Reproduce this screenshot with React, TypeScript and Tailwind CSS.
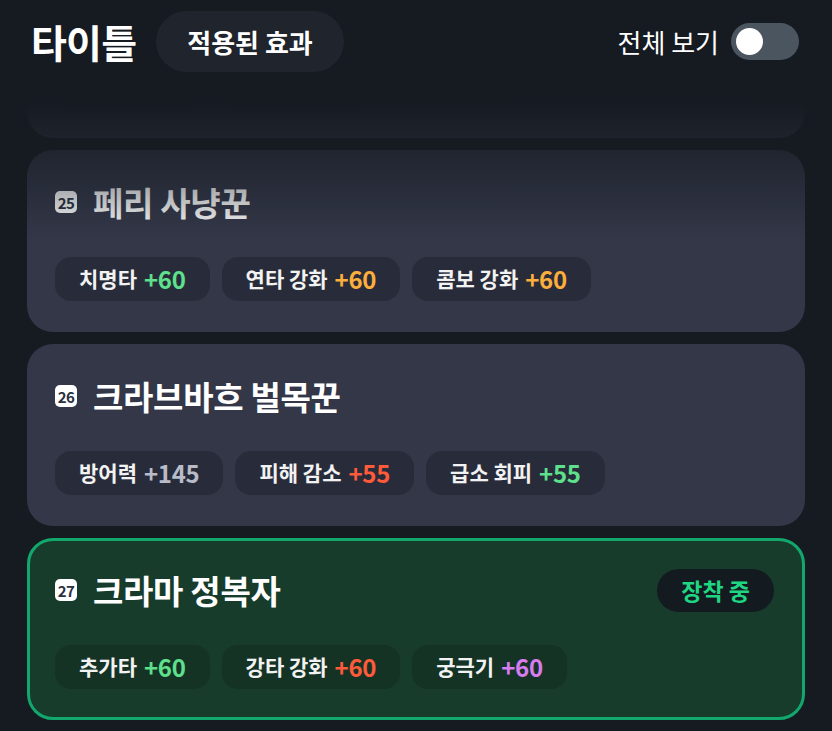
import { useState } from 'react'

type Stat = { label: string; value: string; tone: 'green' | 'orange' | 'gray' | 'red' | 'purple' }

interface Title {
  no: number
  name: string
  stats: Stat[]
  equipped?: boolean
}

const TITLES: Title[] = [
  {
    no: 24,
    name: '숲의 수호자',
    stats: [
      { label: '체력', value: '+120', tone: 'gray' },
      { label: '치명타', value: '+40', tone: 'green' },
    ],
  },
  {
    no: 25,
    name: '페리 사냥꾼',
    stats: [
      { label: '치명타', value: '+60', tone: 'green' },
      { label: '연타 강화', value: '+60', tone: 'orange' },
      { label: '콤보 강화', value: '+60', tone: 'orange' },
    ],
  },
  {
    no: 26,
    name: '크라브바흐 벌목꾼',
    stats: [
      { label: '방어력', value: '+145', tone: 'gray' },
      { label: '피해 감소', value: '+55', tone: 'red' },
      { label: '급소 회피', value: '+55', tone: 'green' },
    ],
  },
  {
    no: 27,
    name: '크라마 정복자',
    equipped: true,
    stats: [
      { label: '추가타', value: '+60', tone: 'green' },
      { label: '강타 강화', value: '+60', tone: 'red' },
      { label: '궁극기', value: '+60', tone: 'purple' },
    ],
  },
]

const toneClass = {
  green: 'text-[#5ee08c]',
  orange: 'text-[#fbae3c]',
  gray: 'text-[#b8bcc8]',
  red: 'text-[#ff5b3b]',
  purple: 'text-[#d97cf2]',
}

function TitleCard({ title }: { title: Title }) {
  const active = !!title.equipped
  return (
    <div
      className={`shrink-0 rounded-[26px] border-[3px] pt-[30px] pb-[28px] px-[25px] ${
        active ? 'bg-[#173c2b] border-[#12a86d]' : 'bg-[#333748] border-transparent'
      }`}
    >
      {/* name row */}
      <div className="flex items-center h-[38px]">
        <span className="w-[22px] h-[22px] shrink-0 rounded-[5px] bg-white text-[#2b3040] text-[15px] font-bold leading-none flex items-center justify-center tracking-[-0.5px]">
          {title.no}
        </span>
        <span className="ml-[16px] text-[33px] font-bold text-white leading-none tracking-[-0.3px]">
          {title.name}
        </span>
        {active && (
          <span className="ml-auto mr-[3px] h-[43px] px-[24px] rounded-full bg-[#131a20] text-[#1fd682] text-[23px] font-bold flex items-center">
            장착 중
          </span>
        )}
      </div>

      {/* stat chips */}
      <div className="flex gap-3 mt-[36px]">
        {title.stats.map((s) => (
          <span
            key={s.label}
            className={`h-[44px] px-[24px] rounded-[16px] flex items-center gap-[7px] ${
              active ? 'bg-[#153325]' : 'bg-[#282c3a]'
            }`}
          >
            <span className="text-[21px] font-bold text-[#f2f2f2]">{s.label}</span>
            <span className={`text-[24px] font-bold tracking-[-0.3px] ${toneClass[s.tone]}`}>{s.value}</span>
          </span>
        ))}
      </div>
    </div>
  )
}

export default function App() {
  const [showAll, setShowAll] = useState(false)

  return (
    <div className="h-screen w-full bg-[#161b22] flex flex-col overflow-hidden font-['Noto_Sans_CJK_KR','Noto_Sans',sans-serif]">
      {/* header */}
      <header className="h-[83px] shrink-0 flex items-center pl-[31px] pr-[33px]">
        <h1 className="text-[39px] font-bold text-white tracking-[-0.8px] leading-none">타이틀</h1>
        <button className="ml-[20px] h-[61px] px-[31px] rounded-full bg-[#1f242d] text-white text-[26px] font-bold">
          적용된 효과
        </button>
        <div className="ml-auto flex items-center gap-3">
          <span className="text-[26px] text-white">전체 보기</span>
          <button
            onClick={() => setShowAll(!showAll)}
            className={`w-[68px] h-[37px] rounded-full p-[5px] flex ${
              showAll ? 'bg-[#12a86d] justify-end' : 'bg-[#4b5560] justify-start'
            }`}
          >
            <span className="w-[27px] h-[27px] rounded-full bg-white" />
          </button>
        </div>
      </header>

      {/* title list (scrolled to bottom) */}
      <div className="relative flex-1 min-h-0 overflow-hidden">
        <div className="h-full flex flex-col justify-end gap-[12px] px-[27px] pb-[11px]">
          {TITLES.map((t) => (
            <TitleCard key={t.no} title={t} />
          ))}
        </div>
        {/* fade under header */}
        <div className="pointer-events-none absolute inset-x-0 top-0 h-[157px] bg-gradient-to-b from-[#161b22] from-[12%] to-transparent" />
      </div>
    </div>
  )
}
